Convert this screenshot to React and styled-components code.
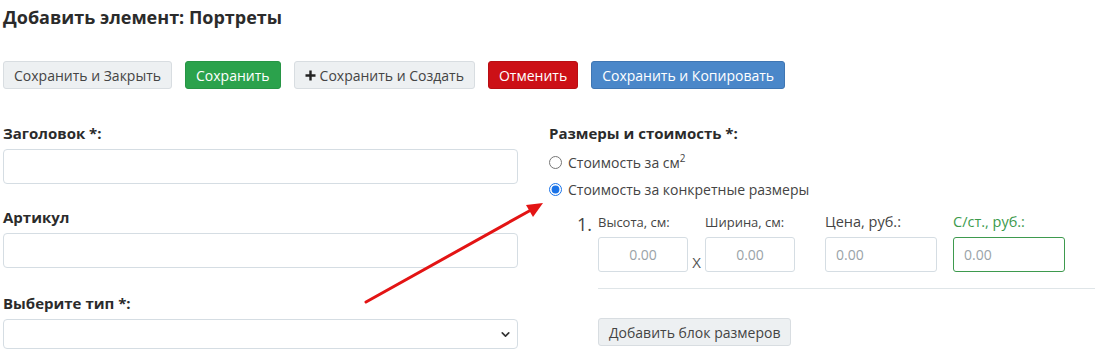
import React from "react";
import styled, { createGlobalStyle } from "styled-components";
import { ChevronDown } from "lucide-react";

const GlobalStyle = createGlobalStyle`
  body {
    margin: 0;
    background: #fff;
    font-family: "Open Sans", "Liberation Sans", sans-serif;
    color: #333;
  }
`;

const Page = styled.div`
  position: relative;
  width: 1098px;
  height: 358px;
  padding: 0 3px;
  box-sizing: border-box;
  overflow: hidden;
`;

const Title = styled.h3`
  margin: 0;
  padding-top: 5px;
  font-size: 18px;
  line-height: 25px;
  font-weight: 700;
  color: #2b2b2b;
`;

const Toolbar = styled.div`
  display: flex;
  gap: 13px;
  margin-top: 31px;
`;

const variants = {
  light: { bg: "#edf0f2", border: "#d8dde1", color: "#444" },
  green: { bg: "#2ba24c", border: "#279545", color: "#fff" },
  red: { bg: "#cc1016", border: "#b80e13", color: "#fff" },
  blue: { bg: "#4a87c9", border: "#3f76b3", color: "#fff" },
};

const Button = styled.button`
  display: inline-flex;
  align-items: center;
  gap: 4px;
  height: 28px;
  padding: 0 10px;
  border-radius: 3px;
  border: 1px solid ${(p) => variants[p.$variant || "light"].border};
  background: ${(p) => variants[p.$variant || "light"].bg};
  color: ${(p) => variants[p.$variant || "light"].color};
  font-family: inherit;
  font-size: 14px;
  white-space: nowrap;
`;

const Columns = styled.div`
  display: grid;
  grid-template-columns: 515px 1fr;
  column-gap: 31px;
  margin-top: 33px;
`;

const Column = styled.div`
  display: flex;
  flex-direction: column;
`;

const Label = styled.div`
  font-size: 15px;
  line-height: 22px;
  font-weight: 700;
  color: #2b2b2b;
  margin-bottom: 5px;
  margin-top: ${(p) => p.$top || 0}px;
`;

const TextInput = styled.input`
  box-sizing: border-box;
  width: 100%;
  height: 35px;
  border: 1px solid #d5dde3;
  border-radius: 4px;
  background: #fff;
`;

const SelectWrap = styled.div`
  position: relative;
  height: 30px;

  svg {
    position: absolute;
    right: 6px;
    top: 9px;
    color: #333;
  }
`;

const Select = styled.select`
  box-sizing: border-box;
  width: 100%;
  height: 30px;
  appearance: none;
  border: 1px solid #d5dde3;
  border-radius: 4px;
  background: #fff;
`;

const RadioRow = styled.label`
  display: flex;
  align-items: center;
  gap: 6px;
  height: 27px;
  font-size: 14px;
  color: #444;

  input {
    margin: 0;
    width: 13px;
    height: 13px;
    accent-color: #1a73e8;
  }

  sup {
    font-size: 10px;
    line-height: 0;
  }
`;

const SizeBlock = styled.div`
  display: flex;
  align-items: flex-start;
  margin-top: 9px;
  padding-left: 28px;
`;

const Number = styled.div`
  font-size: 18px;
  color: #444;
  width: 21px;
  line-height: 22px;
  margin-top: 1px;
`;

const SizeBody = styled.div`
  flex: 1;
`;

const Fields = styled.div`
  display: flex;
  align-items: flex-end;
  padding-bottom: 16px;
  border-bottom: 1px solid #dfe5e8;
`;

const Field = styled.div`
  display: flex;
  flex-direction: column;
  margin-right: ${(p) => p.$gap || 0}px;
`;

const FieldLabel = styled.div`
  font-size: ${(p) => (p.$big ? 14.5 : 13)}px;
  line-height: 20px;
  color: ${(p) => (p.$green ? "#3c9a4c" : "#444")};
  margin-bottom: 5px;
`;

const NumInput = styled.input`
  box-sizing: border-box;
  width: ${(p) => p.$w}px;
  height: 35px;
  border: 1px solid ${(p) => (p.$green ? "#3e9a4e" : "#d5dde3")};
  border-radius: 3px;
  padding: 0 10px;
  text-align: ${(p) => (p.$center ? "center" : "left")};
  font-family: inherit;
  font-size: 14px;
  background: #fff;

  &::placeholder {
    color: #9aa3a8;
  }
`;

const Times = styled.span`
  font-size: 15px;
  line-height: 20px;
  color: #555;
  width: 17px;
  text-align: center;
`;

const AddRow = styled.div`
  margin-top: 29px;
`;

const Arrow = styled.svg`
  position: absolute;
  left: 0;
  top: 0;
  pointer-events: none;
`;

const PlusIcon = () => (
  <svg width="11" height="11" viewBox="0 0 11 11">
    <path d="M5.5 0.5v10M0.5 5.5h10" stroke="#222" strokeWidth="2.4" />
  </svg>
);

export default function App() {
  return (
    <Page>
      <GlobalStyle />
      <Title>Добавить элемент: Портреты</Title>
      <Toolbar>
        <Button>Сохранить и Закрыть</Button>
        <Button $variant="green">Сохранить</Button>
        <Button>
          <PlusIcon />
          Сохранить и Создать
        </Button>
        <Button $variant="red">Отменить</Button>
        <Button $variant="blue">Сохранить и Копировать</Button>
      </Toolbar>
      <Columns>
        <Column>
          <Label>Заголовок *:</Label>
          <TextInput />
          <Label $top={22}>Артикул</Label>
          <TextInput />
          <Label $top={24}>Выберите тип *:</Label>
          <SelectWrap>
            <Select>
              <option></option>
            </Select>
            <ChevronDown size={13} strokeWidth={3} />
          </SelectWrap>
        </Column>
        <Column>
          <Label>Размеры и стоимость *:</Label>
          <RadioRow>
            <input type="radio" name="mode" />
            <span>
              Стоимость за см<sup>2</sup>
            </span>
          </RadioRow>
          <RadioRow>
            <input type="radio" name="mode" defaultChecked />
            <span>Стоимость за конкретные размеры</span>
          </RadioRow>
          <SizeBlock>
            <Number>1.</Number>
            <SizeBody>
              <Fields>
                <Field>
                  <FieldLabel>Высота, см:</FieldLabel>
                  <NumInput $w={90} $center placeholder="0.00" />
                </Field>
                <Times>X</Times>
                <Field $gap={30}>
                  <FieldLabel>Ширина, см:</FieldLabel>
                  <NumInput $w={90} $center placeholder="0.00" />
                </Field>
                <Field $gap={16}>
                  <FieldLabel $big>Цена, руб.:</FieldLabel>
                  <NumInput $w={112} placeholder="0.00" />
                </Field>
                <Field>
                  <FieldLabel $big $green>С/ст., руб.:</FieldLabel>
                  <NumInput $w={112} $green placeholder="0.00" />
                </Field>
              </Fields>
              <AddRow>
                <Button>Добавить блок размеров</Button>
              </AddRow>
            </SizeBody>
          </SizeBlock>
        </Column>
      </Columns>
      <Arrow width="1098" height="358">
        <line x1="366" y1="302" x2="531" y2="210" stroke="#e31414" strokeWidth="3" strokeLinecap="round" />
        <polygon points="543,203 526,205 533,217" fill="#e31414" />
      </Arrow>
    </Page>
  );
}
